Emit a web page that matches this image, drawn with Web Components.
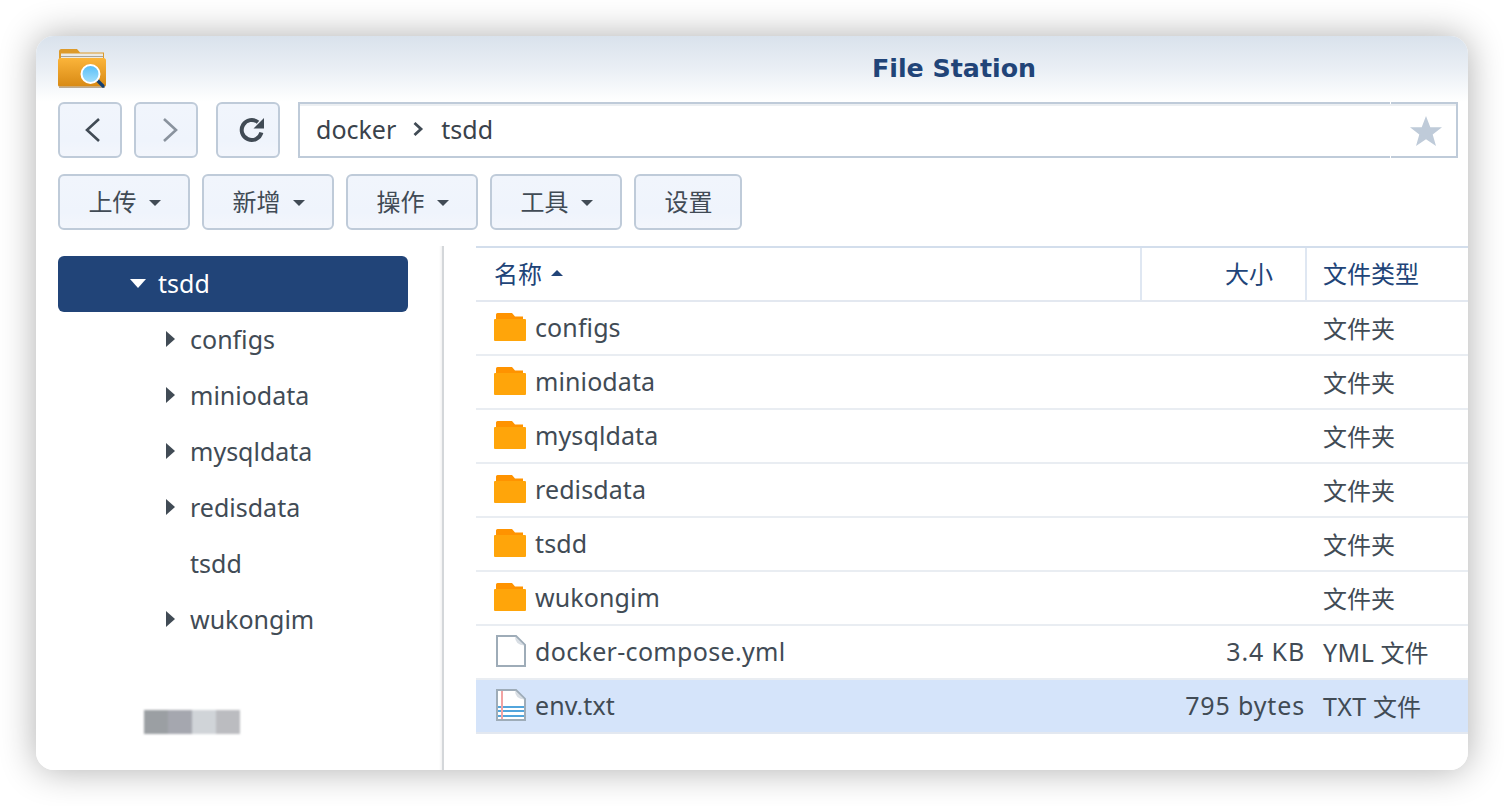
<!DOCTYPE html>
<html lang="zh"><head><meta charset="utf-8"><style>
html,body{margin:0;padding:0;background:#fff}
body{width:1504px;height:806px;overflow:hidden;font-family:"Noto Sans","Noto Sans CJK SC",sans-serif;color:#414b55}
</style></head><body>
<fs-desktop><fs-window></fs-window></fs-desktop>
<script>
const defs={
'fs-desktop':`<style>:host{display:block;box-sizing:border-box;width:1504px;height:806px;padding:36px}</style><slot></slot>`,
'fs-icon-app':`<style>:host{display:block;width:48px;height:42px}svg{display:block}</style>
<svg width="48" height="42" viewBox="0 0 48 42"><defs><linearGradient id="f" x1="0" y1="0" x2="0" y2="1"><stop offset="0" stop-color="#fbb43a"/><stop offset="1" stop-color="#d88a14"/></linearGradient><linearGradient id="b" x1="0" y1="0" x2="0" y2="1"><stop offset="0" stop-color="#55bdf7"/><stop offset="1" stop-color="#a6e0fb"/></linearGradient></defs>
<path d="M1 3.500Q1 1 3.500 1H19l3 3.500h24v8H1z" fill="#dd9a2a"/><rect x="3" y="5.500" width="42" height="6" fill="#eceae4"/><rect x="3" y="8" width="42" height="1" fill="#a8a49a"/>
<path d="M0 12.500Q0 10 2.500 10H45.500Q48 10 48 12.500V37Q48 38.500 46.500 38.500H1.500Q0 38.500 0 37z" fill="url(#f)"/><rect x="1" y="38.500" width="46" height="1.500" fill="#8a6a3a" opacity=".55"/>
<path d="M38 31l7 7" stroke="#143f70" stroke-width="3.200" stroke-linecap="round"/><circle cx="32.500" cy="26" r="9" fill="url(#b)" stroke="#fff" stroke-width="2"/></svg>`,
'fs-btn':`<style>:host{display:inline-flex;box-sizing:border-box;height:56px;align-items:center;justify-content:center;gap:12px;border:2px solid #bfcbd9;border-radius:6px;background:linear-gradient(#f1f5fc,#eff4fc 70%,#f3f6fc);font-size:24px;color:#414b55;flex:none;padding:0 0 3px 1px}::slotted(svg){display:block}</style><slot></slot>`,
'fs-path':`<style>:host{flex:1;box-sizing:border-box;height:56px;display:flex;align-items:center;border:2px solid #bfcbd9;background:#fff;position:relative;font-size:25px}
.in{flex:1;display:flex;align-items:center;gap:15px;padding-left:16px;height:100%;border-top:2px solid #eceff2;box-sizing:border-box;color:#3a424b;padding-bottom:4px}
.in svg{margin-left:1px;margin-right:1px}
.st{width:64px;height:100%;display:flex;align-items:center;justify-content:center;padding-left:4px;box-sizing:border-box;border-top:2px solid #eceff2}svg{display:block}
i{position:absolute;left:1090px;top:-2px;bottom:-2px;width:1px;background:linear-gradient(#fff 2px,transparent 2px,transparent calc(100% - 2px),#fff 0)}</style>
<div class="in"><span>docker</span><svg width="13" height="16" viewBox="0 0 13 16"><path d="M2.500 2l6.500 6-6.500 6" fill="none" stroke="#414b55" stroke-width="2.800"/></svg><span>tsdd</span></div><div class="st"><svg width="32" height="31" viewBox="0 0 32 31"><path d="M16 0l4.300 11.300H32l-9.300 7.200L26 30l-10-6.800L6 30l3.300-11.500L0 11.300h11.700z" fill="#bfcbd9"/></svg></div><i></i>`,
'fs-tree-row':`<style>:host{display:flex;align-items:center;height:56px;box-sizing:border-box;font-size:25px;border-radius:6px;color:#414b55;padding-left:var(--pad,132px);padding-bottom:2px}
:host([sel]){background:#214478;color:#fff}.a{width:var(--aw,26px);flex:none;display:flex}svg{display:block}</style>
<span class="a"></span><span><slot></slot></span>`,
'fs-tree':`<style>:host{display:block;box-sizing:border-box;width:408px;height:524px;padding:10px 0 0 22px;position:relative;border-right:2px solid #d4d7da;flex:none;box-shadow:inset -4px 0 3px -3px #eee}
.w{width:350px}.blur{position:absolute;left:108px;top:464px;width:96px;height:24px;display:flex;filter:blur(1px)}.blur b{flex:1}</style>
<div class="w"><slot></slot></div><div class="blur"><b style="background:#9b9fa3"></b><b style="background:#a5a7af"></b><b style="background:#d0d4d8"></b><b style="background:#bbbcc0"></b></div>`,
'fs-head':`<style>:host{display:grid;grid-template-columns:var(--cols);height:56px;box-sizing:border-box;border-top:2px solid #d3deec;border-bottom:2px solid #e3e8f0;font-size:24px;color:#214478;align-items:stretch}
div{display:flex;align-items:center;padding-bottom:3px;box-sizing:border-box}.n{padding-left:18px;gap:9px}.s{justify-content:flex-end;padding-right:32px;border-left:2px solid #dfe7f2;border-right:2px solid #dfe7f2}.t{padding-left:16px}svg{display:block}</style>
<div class="n"><span>名称</span><svg width="12" height="6" viewBox="0 0 12 6"><path d="M6 0l6 6H0z" fill="#214478"/></svg></div><div class="s">大小</div><div class="t">文件类型</div>`,
'fs-row':`<style>:host{display:grid;grid-template-columns:var(--cols);height:54px;box-sizing:border-box;border-bottom:2px solid #e9edf2;font-size:24px;color:#414b55;align-items:center}
:host([sel]){background:#d5e4fa;border-bottom-color:#e3e8f0}
.n{display:flex;align-items:center;gap:9px;padding-left:18px;padding-bottom:2px;font-size:25px;letter-spacing:var(--ls,.1px)}.s{text-align:right;padding-right:2px;padding-bottom:2px;font-size:25px;letter-spacing:.85px}.t{padding-left:16px;padding-bottom:1px}.t b{font-weight:400;font-size:25px;letter-spacing:.4px}.ic{width:32px;height:32px;flex:none;display:block}</style>
<div class="n"><span class="ic" id="ic"></span><span id="nm"></span></div><div class="s" id="sz"></div><div class="t" id="ty"></div>`,
'fs-list':`<style>:host{display:block;flex:1;padding-left:32px;--cols:664px 167px 1fr}</style><slot></slot>`,
'fs-window':`<style>:host{display:block;width:1432px;height:734px;border-radius:18px;overflow:hidden;background:linear-gradient(#d9e2ec 0,#eaeff5 34px,#fff 66px,#fff 100%);position:relative}
.wrap{display:flex;flex-direction:column;height:100%}
.title{height:66px;display:flex;align-items:center;padding-left:22px;position:relative;flex:none}
.title span{position:absolute;left:404px;right:0;text-align:center;font:700 25.300px "DejaVu Sans",sans-serif;color:#214478;padding-bottom:2px}
.nav,.tools{display:flex;padding:0 10px 0 22px;flex:none}.nav{gap:12px}.tools{gap:12px;margin-top:16px;margin-bottom:16px}
.nav fs-btn{width:64px;padding-left:6px;padding-bottom:0}.nav fs-btn.r{margin-left:6px;margin-right:6px}
.nav fs-btn.f{padding-left:8px}
.tools fs-btn{width:132px}.tools fs-btn.x{width:108px}
.body{display:flex;flex:1;min-height:0}</style>
<div class="wrap"><div class="title"><fs-icon-app></fs-icon-app><span>File Station</span></div>
<div class="nav"><fs-btn><svg width="18" height="26" viewBox="0 0 18 26"><path d="M15 2L3 13l12 11" fill="none" stroke="#414b55" stroke-width="2.600"/></svg></fs-btn><fs-btn class="f"><svg width="18" height="26" viewBox="0 0 18 26"><path d="M3 2l12 11L3 24" fill="none" stroke="#8a939e" stroke-width="2.600"/></svg></fs-btn><fs-btn class="r"><svg width="27" height="26" viewBox="0 0 27 26"><path d="M23.400 15.500A10 10 0 1 1 20 5.200" fill="none" stroke="#414b55" stroke-width="4"/><path d="M26 1V11.500H15.500z" fill="#414b55"/></svg></fs-btn><fs-path></fs-path></div>
<div class="tools" id="tools"></div>
<div class="body"><fs-tree id="tree"></fs-tree><fs-list id="list"></fs-list></div></div>`
};
class Base extends HTMLElement{constructor(){super();const s=this.attachShadow({mode:'open'});s.innerHTML=defs[this.localName];}}
const caret='<svg width="12" height="6" viewBox="0 0 12 6" style="margin-top:5px"><path d="M0 0h12L6 6z" fill="#414b55"/></svg>';
const folder='<svg width="32" height="32" viewBox="0 0 32 32"><path d="M2 3.500Q2 2 3.500 2H18l3 3.500h8V9H2z" fill="#ff9300"/><rect y="8" x="0" width="32" height="22" rx="1" fill="#ffa50a"/></svg>';
const file='<svg width="32" height="32" viewBox="0 0 32 32"><path d="M3 1h19l9 9v21H3z" fill="#fff" stroke="#9eacb8" stroke-width="2"/><path d="M21 1.500Q21 10 30.500 10.500z" fill="#d8dee4"/>';
const doc=file+'</svg>';
const txt=file+'<path d="M4 18h26M4 22h26M4 27h26" stroke="#52a5dc" stroke-width="1.800"/><path d="M8 2v28" stroke="#f2a3a3" stroke-width="2"/></svg>';
class Row extends Base{connectedCallback(){const r=this.shadowRoot;const d=this.dataset;r.getElementById('ic').innerHTML={f:folder,d:doc,t:txt}[d.i];r.getElementById('nm').textContent=d.n;r.getElementById('sz').textContent=d.s||'';const ty=r.getElementById('ty');if(d.l){const b=document.createElement('b');b.textContent=d.l;ty.append(b,' '+d.t);}else ty.textContent=d.t;}}
class Tree extends Base{connectedCallback(){const s=this.shadowRoot.querySelector('.a');const k=this.dataset.k;if(k==='o')s.innerHTML='<svg width="16" height="9" viewBox="0 0 16 9"><path d="M0 0h16L8 9z" fill="#fff"/></svg>';if(k==='c')s.innerHTML='<svg width="9" height="16" viewBox="0 0 9 16"><path d="M0 0l9 8-9 8z" fill="#414b55"/></svg>';}}
class Win extends Base{connectedCallback(){const r=this.shadowRoot;
 r.getElementById('tools').innerHTML=['上传','新增','操作','工具'].map(t=>`<fs-btn><span>${t}</span>${caret}</fs-btn>`).join('')+'<fs-btn class="x"><span>设置</span></fs-btn>';
 r.getElementById('tree').innerHTML='<fs-tree-row sel data-k="o" style="--pad:72px;--aw:28px;width:350px">tsdd</fs-tree-row>'+[['configs','c'],['miniodata','c'],['mysqldata','c'],['redisdata','c'],['tsdd',''],['wukongim','c']].map(([n,k])=>`<fs-tree-row data-k="${k}" style="--pad:108px;--aw:24px">${n}</fs-tree-row>`).join('');
 r.getElementById('list').innerHTML='<fs-head></fs-head>'+['configs','miniodata','mysqldata','redisdata','tsdd','wukongim'].map(n=>`<fs-row data-i="f" data-n="${n}" data-t="文件夹"></fs-row>`).join('')+'<fs-row style="--ls:.32px" data-i="d" data-n="docker-compose.yml" data-s="3.4 KB" data-l="YML" data-t="文件"></fs-row><fs-row sel data-i="t" data-n="env.txt" data-s="795 bytes" data-l="TXT" data-t="文件"></fs-row>';
}}
for(const k of Object.keys(defs)){customElements.define(k,k==='fs-row'?class extends Row{}:k==='fs-tree-row'?class extends Tree{}:k==='fs-window'?class extends Win{}:class extends Base{});}
</script>
<style>fs-window{box-shadow:0 0 36px rgba(0,0,0,.32)}</style>
</body></html>
